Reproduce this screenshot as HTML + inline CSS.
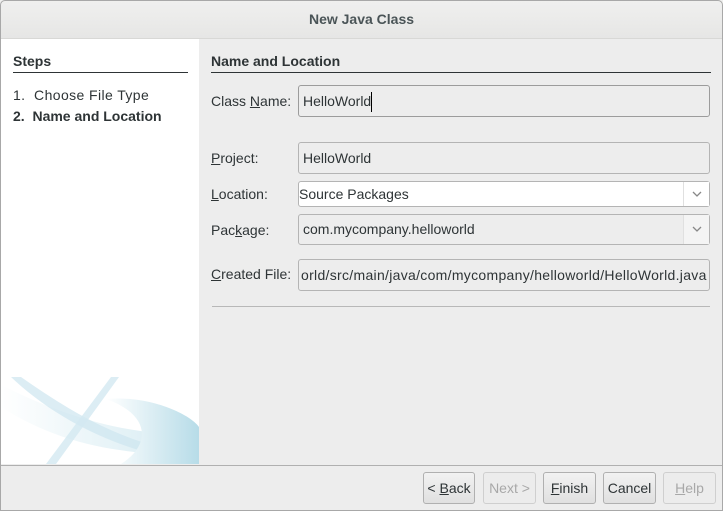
<!DOCTYPE html>
<html><head><meta charset="utf-8"><style>
*{box-sizing:border-box;margin:0;padding:0}
body{width:723px;height:511px;overflow:hidden;font-family:"Liberation Sans","DejaVu Sans",sans-serif;font-size:14px;color:#2e3436;background:#ededed;position:relative}
.win{position:absolute;left:0;top:0;width:723px;height:511px;background:#ededed}
.frame{position:absolute;left:0;top:0;width:723px;height:511px;border:1px solid #a8a8a8;border-radius:5px 5px 0 0;pointer-events:none}
.title{position:absolute;left:0;top:0;width:723px;height:39px;background:linear-gradient(#f0f0ef,#e6e6e5);border-bottom:1px solid #d8d8d6;text-align:center;line-height:39px;font-weight:bold;font-size:14px;color:#4a5457}
.left{position:absolute;left:1px;top:39px;width:198px;height:425px;background:#fff}
.abs{position:absolute}
.h{font-weight:bold;font-size:14px}
.rule{position:absolute;height:1px;background:#2e3436}
.lbl{position:absolute;left:211px;font-size:14px}
.box{position:absolute;left:298px;width:412px;border:1px solid #b4b4b4;border-radius:3px;background:#ededed;padding-left:4px;font-size:14px}
u{text-decoration:underline}
.btn{position:absolute;top:472px;height:32px;border:1px solid #b0b0b0;border-radius:3px;background:linear-gradient(#f2f2f2,#e0e0e0);text-align:center;line-height:30px;font-size:14px}
.dis{color:#a8a8a8;background:#ececec;border-color:#cfcfcf}
.arr{position:absolute;right:0;top:0;width:26px;height:100%;border-left:1px solid #e0e0e0;background:#f4f4f4}
</style></head><body>
<div class="win">
<div class="title">New Java Class</div>
<div class="left">
<svg class="abs" style="left:0;top:336px" width="198" height="89" viewBox="0 0 198 89">
<defs><linearGradient id="g" x1="0" x2="1"><stop offset="0" stop-color="#fff"/><stop offset="1" stop-color="#b7dce8"/></linearGradient></defs>
<path d="M0 32 C60 70 120 80 198 80 L198 60 C140 60 80 50 0 10Z" fill="url(#g)" opacity=".6"/>
<path d="M10 2 L20 2 C60 30 100 55 150 70 L148 78 C100 65 50 40 10 2Z" fill="#cde6ef" opacity=".7"/>
<path d="M110 2 L118 2 L55 89 L45 89Z" fill="#d3e9f1" opacity=".8"/>
<path d="M105 24 C150 20 190 40 198 52 L198 89 L120 89 C150 70 150 40 105 24Z" fill="url(#g)"/>
</svg>
</div>
<div class="abs h" style="left:13px;top:53px">Steps</div>
<div class="rule" style="left:13px;top:72px;width:175px"></div>
<div class="abs" style="left:13px;top:87px;letter-spacing:.4px">1.&nbsp;&nbsp;Choose File Type</div>
<div class="abs h" style="left:13px;top:108px">2.&nbsp;&nbsp;Name and Location</div>
<div class="abs h" style="left:211px;top:53px">Name and Location</div>
<div class="rule" style="left:211px;top:72px;width:500px"></div>
<div class="lbl" style="top:93px">Class <u>N</u>ame:</div>
<div class="box" style="top:85px;height:32px;line-height:30px;border-color:#9c9c9c">HelloWorld<span style="display:inline-block;width:1px;height:20px;background:#000;vertical-align:middle"></span></div>
<div class="lbl" style="top:150px"><u>P</u>roject:</div>
<div class="box" style="top:142px;height:32px;line-height:30px">HelloWorld</div>
<div class="lbl" style="top:186px"><u>L</u>ocation:</div>
<div class="box" style="top:181px;height:26px;line-height:24px;background:#fff;padding-left:0">Source Packages<div class="arr" style="background:#fff"><svg width="26" height="24"><path d="M9 10 L13 14 L17 10" stroke="#888" stroke-width="1.3" fill="none"/></svg></div></div>
<div class="lbl" style="top:222px">Pac<u>k</u>age:</div>
<div class="box" style="top:214px;height:31px;line-height:29px">com.mycompany.helloworld<div class="arr"><svg width="26" height="29"><path d="M9 12 L13 16 L17 12" stroke="#888" stroke-width="1.3" fill="none"/></svg></div></div>
<div class="lbl" style="top:266px"><u>C</u>reated File:</div>
<div class="box" style="top:259px;height:32px;line-height:30px;overflow:hidden;white-space:nowrap;padding-left:2px;letter-spacing:.3px">orld/src/main/java/com/mycompany/helloworld/HelloWorld.java</div>
<div class="abs" style="left:212px;top:306px;width:498px;height:1px;background:#b8b8b8"></div>
<div class="abs" style="left:1px;top:465px;width:721px;height:1px;background:#b0b0b0"></div>
<div class="btn" style="left:423px;width:52px">&lt; <u>B</u>ack</div>
<div class="btn dis" style="left:483px;width:53px">Next &gt;</div>
<div class="btn" style="left:543px;width:53px"><u>F</u>inish</div>
<div class="btn" style="left:603px;width:53px">Cancel</div>
<div class="btn dis" style="left:663px;width:53px"><u>H</u>elp</div>
</div>
<div class="frame"></div>
</body></html>
